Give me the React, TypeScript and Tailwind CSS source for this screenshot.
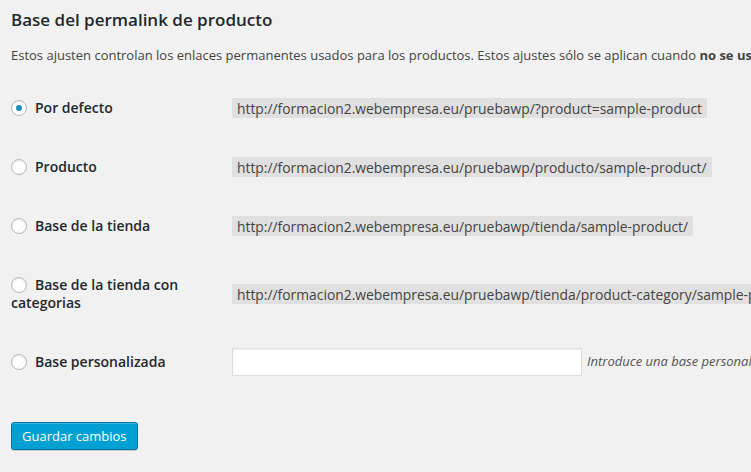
import React from "react";

function Radio({ checked }: { checked?: boolean }) {
  return (
    <span className="relative inline-block w-4 h-4 shrink-0 rounded-full border border-[#b4b9be] bg-white shadow-[inset_0_1px_2px_rgba(0,0,0,0.1)] mr-[8px] align-[-3px]">
      {checked && (
        <span className="absolute left-[4px] top-[4px] w-[6px] h-[6px] rounded-full bg-[#1e8cbe]" />
      )}
    </span>
  );
}

function Code({ children }: { children: React.ReactNode }) {
  return (
    <code className="inline-block whitespace-nowrap px-[5px] pt-[3px] pb-[2px] leading-[15px] text-[13.85px] bg-black/[0.07] text-[#444] mx-px" style={{ fontFamily: "'Open Sans', sans-serif" }}>
      {children}
    </code>
  );
}

function Row({ h, label, checked, children }: { h: string; label: React.ReactNode; checked?: boolean; children: React.ReactNode }) {
  return (
    <div className={`flex items-center ${h}`}>
      <div className="w-[210px] pr-[10px] shrink-0 text-[14px] leading-[18px] font-semibold text-[#23282d] pt-[1px]">
        <label className="block">
          <Radio checked={checked} />
          {label}
        </label>
      </div>
      <div className="px-[10px] flex items-center whitespace-nowrap">{children}</div>
    </div>
  );
}

export default function App() {
  return (
    <div className="w-[751px] h-[472px] overflow-hidden bg-[#f1f1f1]" style={{ fontFamily: "'Open Sans', sans-serif" }}>
      <div className="w-[1200px] pl-[11px] text-[#444]">
        <h2 className="mt-[8px] text-[17px] leading-[23px] font-semibold text-[#23282d]">Base del permalink de producto</h2>
        <p className="mt-[14px] text-[13px] leading-[20px] whitespace-nowrap">
          Estos ajusten controlan los enlaces permanentes usados para los productos. Estos ajustes sólo se aplican cuando <strong className="font-bold">no se usan los enlaces permanentes por defecto</strong>.
        </p>
        <div className="mt-[13px]">
          <Row h="h-[59px]" label="Por defecto" checked>
            <Code>http://formacion2.webempresa.eu/pruebawp/?product=sample-product</Code>
          </Row>
          <Row h="h-[59px]" label="Producto">
            <Code>http://formacion2.webempresa.eu/pruebawp/producto/sample-product/</Code>
          </Row>
          <Row h="h-[59px]" label="Base de la tienda">
            <Code>http://formacion2.webempresa.eu/pruebawp/tienda/sample-product/</Code>
          </Row>
          <Row h="h-[77px]" label="Base de la tienda con categorias">
            <Code>http://formacion2.webempresa.eu/pruebawp/tienda/product-category/sample-product/</Code>
          </Row>
          <Row h="h-[59px]" label="Base personalizada">
            <input type="text" className="ml-px w-[350px] h-[28px] bg-white border border-[#ddd] shadow-[inset_0_1px_2px_rgba(0,0,0,0.07)] outline-none text-[14px] px-[5px]" />
            <span className="ml-[5px] text-[13px] italic text-[#555]">Introduce una base personalizada para usar. Se debe establecer una base o WordPress usará la de defecto.</span>
          </Row>
        </div>
        <div className="mt-[31px]">
          <button className="h-[28px] px-[10px] pb-px rounded-[3px] bg-[#00a0d2] border border-[#0073aa] text-white text-[13px] leading-[26px] shadow-[inset_0_1px_0_rgba(120,200,230,0.5),0_1px_0_rgba(0,0,0,0.15)]">
            Guardar cambios
          </button>
        </div>
      </div>
    </div>
  );
}
